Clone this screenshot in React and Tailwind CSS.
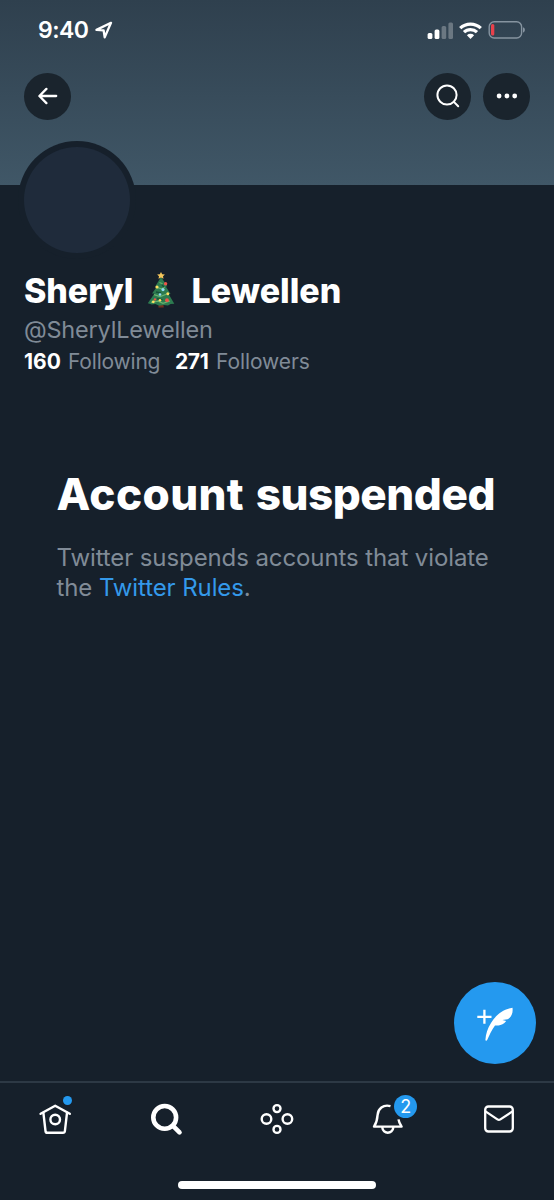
import React from "react";

function StatusBar() {
  return (
    <div className="flex h-[60px] items-center justify-between pr-[28px] pl-[38px]">
      <div className="flex items-center gap-[7px]">
        <span className="w-[50px] text-[23px] leading-[60px] font-semibold tracking-[-0.5px] whitespace-nowrap">9:40</span>
        <svg width="18" height="18" viewBox="0 0 18 18" fill="none" stroke="currentColor" strokeWidth="2.3" strokeLinejoin="round">
          <path d="M16 1.8 1.5 8.9 8.6 9.3 9.7 16.4Z" />
        </svg>
      </div>
      <div className="flex items-center gap-[6px]">
        <svg width="26" height="17" viewBox="0 0 26 17" fill="currentColor">
          <rect x="0.6" y="11" width="4.8" height="6" rx="1.5" />
          <rect x="7.6" y="7.5" width="4.8" height="9.5" rx="1.5" />
          <rect x="14.6" y="4" width="4.6" height="13" rx="1.5" opacity="0.28" />
          <rect x="21.4" y="0.5" width="4.6" height="16.5" rx="1.5" opacity="0.28" />
        </svg>
        <svg width="23" height="17" viewBox="0 0 23 17" fill="none" stroke="currentColor" strokeWidth="3.2">
          <path d="M1.2 6.2a14.8 14.8 0 0 1 20.6 0" />
          <path d="M5 10.2a9.3 9.3 0 0 1 13 0" />
          <path d="M11.5 17 7.9 13.2a5.2 5.2 0 0 1 7.2 0Z" fill="currentColor" stroke="none" />
        </svg>
        <svg width="38" height="18" viewBox="0 0 38 18" fill="none">
          <rect x="1.2" y="0.8" width="32.4" height="16.2" rx="5" stroke="#8694a0" strokeWidth="1.4" />
          <rect x="3" y="3" width="3.3" height="11.6" rx="1.5" fill="#e9414b" />
          <path d="M35 6.2c2.5.8 2.5 4.6 0 5.4Z" fill="#8694a0" />
        </svg>
      </div>
    </div>
  );
}

function RoundButton({ label, children }) {
  return (
    <button aria-label={label} className="flex size-[47px] items-center justify-center rounded-full bg-[#1a242d]">
      {children}
    </button>
  );
}

function Banner() {
  return (
    <header className="h-[184.5px] shrink-0 bg-linear-to-b from-[#2f404e] to-[#405767]">
      <StatusBar />
      <div className="flex justify-between px-[24px] pt-[12.5px]">
        <RoundButton label="Back">
          <svg width="20" height="18" viewBox="0 0 20 18" fill="none" stroke="currentColor" strokeWidth="2.3" strokeLinecap="round" strokeLinejoin="round">
            <path d="M18.2 9H1.6M8.4 1.9 1.4 9l7 7.1" />
          </svg>
        </RoundButton>
        <div className="flex gap-[12px]">
          <RoundButton label="Search">
            <svg width="24" height="24" viewBox="0 0 24 24" fill="none" stroke="currentColor" strokeWidth="2" strokeLinecap="round">
              <circle cx="11" cy="11" r="9.6" />
              <path d="m17.9 17.9 4.3 4.3" />
            </svg>
          </RoundButton>
          <RoundButton label="More">
            <svg width="22" height="6" viewBox="0 0 22 6" fill="currentColor">
              <circle cx="3.1" cy="3" r="2.4" />
              <circle cx="10.9" cy="3" r="2.4" />
              <circle cx="18.7" cy="3" r="2.4" />
            </svg>
          </RoundButton>
        </div>
      </div>
    </header>
  );
}

function Tree() {
  return (
    <svg className="mt-[-1px] ml-[14px] shrink-0" width="28" height="37" viewBox="0 0 28 37">
      <path d="M12 31h4.2l.6 4.6h-5.4Z" fill="#74301f" />
      <path d="M14 5 8.2 14.5l2-.3L5 21.6l2.4-.2L.8 31.2l4 1.3 3.6-.6 3.8 1.8 4.4-.6 4.4.4 2.6-1.5 3.7-.3-5.7-9.6 2-.2-4.8-7.4 1.6-.2Z" fill="#2d7b50" />
      <path d="m10 15.5 4.6 1.4 3.2-2M7 22.6l6.2 2 6-2.4M4 30.4l7.2-1.2 4.8 2.2 7-2.4M12.4 10.5l3.2 1.2" stroke="#6ab36d" strokeWidth="1.2" fill="none" />
      <path d="m9 20 5 1M10 26.8l5.6 1.1M15 13l2 2" stroke="#165239" strokeWidth="1.4" fill="none" />
      <path d="m14 0 1.2 2.2 2.7.3-1.9 1.8.5 2.5-2.5-1.2-2.5 1.2.5-2.5-1.9-1.8 2.7-.3Z" fill="#f4c65c" />
      <g fill="#ee5549"><circle cx="18.6" cy="11.8" r="1.7" /><circle cx="20" cy="28.2" r="1.9" /><circle cx="8" cy="27.4" r="1.2" /></g>
      <g fill="#ffe061"><circle cx="10" cy="15" r="1.6" /><circle cx="20.8" cy="21.7" r="1.5" /><circle cx="6.3" cy="29.8" r="1.4" /><circle cx="13" cy="28.3" r="1.3" /></g>
      <g fill="#8fdcf4"><circle cx="16" cy="17.6" r="1.6" /><circle cx="13" cy="22.5" r="1.3" /></g>
    </svg>
  );
}

function Profile() {
  return (
    <section className="px-[24px]">
      <div className="relative -mt-[43.5px] -ml-[6px] size-[118px] rounded-full bg-[#16202b] p-[6px]">
        <div className="size-[106px] rounded-full bg-[#1f2b3b]" />
      </div>
      <h1 className="mt-[11.5px] flex h-[40px] items-center text-[34px] leading-[40px] font-extrabold whitespace-nowrap">
        <span className="w-[109px] tracking-[-0.1px]">Sheryl</span>
        <Tree />
        <span className="ml-[16.5px]">Lewellen</span>
      </h1>
      <p className="text-[23.5px] leading-[38px] tracking-[-0.2px] text-[#808b97]">@SherylLewellen</p>
      <div className="flex text-[21px] leading-[26px] whitespace-nowrap text-[#808b97]">
        <b className="w-[44px] font-bold text-white">160</b>
        <span className="w-[107px] tracking-[-0.2px]">Following</span>
        <b className="w-[41px] font-bold tracking-[-0.4px] text-white">271</b>
        <span className="tracking-[-0.1px]">Followers</span>
      </div>
    </section>
  );
}

function Notice() {
  return (
    <section className="mt-[92.5px] pl-[56.5px]">
      <h2 className="text-[44px] leading-[54px] font-extrabold whitespace-nowrap [word-spacing:2px]">
        <span className="tracking-[0.4px]">Account</span> <span className="tracking-[-0.45px]">suspended</span>
      </h2>
      <p className="mt-[22px] text-[24px] leading-[29.5px] tracking-[-0.1px] whitespace-nowrap text-[#808b97]">
        Twitter suspends accounts that violate
        <br />
        the <a className="text-[#3499ea]">Twitter Rules</a>.
      </p>
    </section>
  );
}

function ComposeButton() {
  return (
    <button aria-label="Compose" className="absolute top-[982px] left-[454px] flex size-[82px] items-center justify-center rounded-full bg-[#2499ef]">
      <svg width="36" height="36" viewBox="0 0 36 36" fill="#fff">
        <path d="M7.4 4.8v14M.3 11.8h14.2" stroke="#fff" strokeWidth="2.3" />
        <path d="M8.4 35C8.8 29 10.6 23.4 14 18 18.8 10.4 25.4 4 35.5 2.8 36.2 8 34.4 12.2 30.6 14.2L25.4 15 29.2 16C26.9 18.9 24.2 20.4 21.5 20.4L18 20.6C14.6 25 12.6 30 10.2 35 9.8 35.9 8.4 35.9 8.4 35Z" />
      </svg>
    </button>
  );
}

function TabBar() {
  return (
    <nav className="grid h-[119px] shrink-0 grid-cols-5 content-start border-t-2 border-[#2d3945] pt-[17.5px] text-white">
      <div className="flex justify-center">
        <div className="relative size-[36px]">
          <svg width="36" height="36" viewBox="0 0 36 36" fill="none" stroke="currentColor" strokeWidth="2.4" strokeLinecap="round" strokeLinejoin="round">
            <path d="M3.6 12.8 18.2 4.7 32.8 12.8" />
            <path d="m6.4 11.8 2.1 18.2a2 2 0 0 0 2 1.8h15.4a2 2 0 0 0 2-1.8L30 11.8" />
            <circle cx="18.2" cy="18.5" r="4.8" />
          </svg>
          <span className="absolute -top-[4.5px] left-[25.5px] size-[9px] rounded-full bg-[#2499ef]" />
        </div>
      </div>
      <div className="flex justify-center">
        <svg width="36" height="36" viewBox="0 0 36 36" fill="none" stroke="currentColor" strokeLinecap="round">
          <circle cx="16.7" cy="16.4" r="11.4" strokeWidth="4.6" />
          <path d="m25.5 25.3 6 6" strokeWidth="4.6" />
        </svg>
      </div>
      <div className="flex justify-center">
        <svg width="36" height="36" viewBox="0 0 36 36" fill="none" stroke="currentColor" strokeWidth="2.4">
          <circle cx="18" cy="7.6" r="3.5" />
          <circle cx="18" cy="28.4" r="3.5" />
          <circle cx="7.5" cy="18" r="4.8" />
          <circle cx="28.4" cy="18" r="4.8" />
        </svg>
      </div>
      <div className="flex justify-center">
        <div className="relative size-[36px]">
          <svg width="36" height="36" viewBox="0 0 36 36" fill="none" stroke="currentColor" strokeWidth="2.4" strokeLinejoin="round">
            <path d="M20.5 5.1C13 3 8 8.1 7.6 13.8 7.3 18.3 7 21.1 4 25.6h27.6c-2-3-2.8-5-3.1-7.3" />
            <path d="M12.2 26c.8 7.6 10.4 7.6 11.2 0" />
          </svg>
          <span className="absolute -top-[5.5px] left-[24.5px] flex size-[23px] items-center justify-center rounded-full bg-[#2499ef] text-[18px] leading-none">2</span>
        </div>
      </div>
      <div className="flex justify-center">
        <svg width="36" height="36" viewBox="0 0 36 36" fill="none" stroke="currentColor" strokeWidth="2.3" strokeLinejoin="round">
          <rect x="4.2" y="5.5" width="27.6" height="25" rx="3.2" />
          <path d="m4.5 10.4 11.9 8a2.7 2.7 0 0 0 3 0l12.1-8" />
        </svg>
      </div>
      <div className="col-span-5 mx-auto mt-[44px] h-[8px] w-[198px] rounded-full bg-white" />
    </nav>
  );
}

export default function App() {
  return (
    <div className="relative flex h-[1200px] w-[554px] flex-col overflow-hidden bg-[#16202b] font-[Inter,'Noto_Sans',sans-serif] text-white">
      <Banner />
      <main className="flex-1">
        <Profile />
        <Notice />
      </main>
      <TabBar />
      <ComposeButton />
    </div>
  );
}
